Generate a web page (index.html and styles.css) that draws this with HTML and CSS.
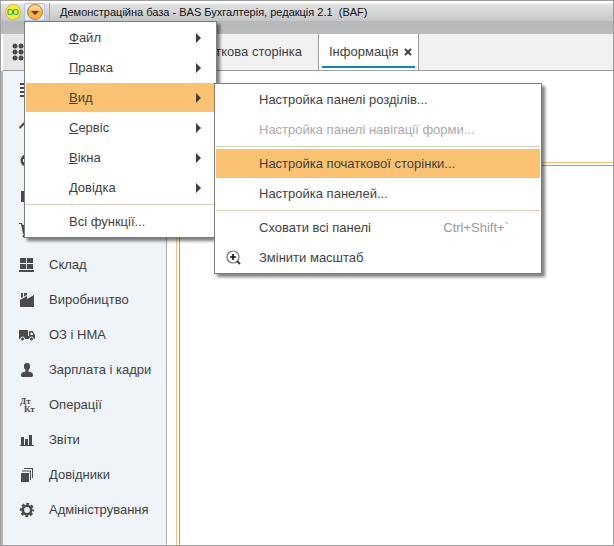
FILE: index.html
```html
<!DOCTYPE html>
<html lang="uk">
<head>
    <meta charset="UTF-8">
    <meta name="viewport" content="width=device-width, initial-scale=1.0">
    <title>Демонстраційна база - BAS Бухгалтерія</title>
    <link rel="stylesheet" href="styles.css">
</head>
<body>
    <!-- Title bar -->
    <header class="titlebar">
        <svg class="app-logo" viewBox="0 0 16 16" width="16" height="16" aria-hidden="true">
            <circle cx="8" cy="8" r="7.5" fill="#f9ee2c" stroke="#e6b93c"/>
            <path d="M7.500 6.500V9C7.500 10 7 10.500 6 10.500H4.500C3.500 10.500 3 10 3 9V7C3 6 3.500 5.500 4.500 5.500H6C7 5.500 7.300 6 8 8S9 10.500 10 10.500H11.500C12.500 10.500 13 10 13 9V7C13 6 12.500 5.500 11.500 5.500H10C9 5.500 8.500 6 8.500 7V9.500" fill="none" stroke="#18b07a" stroke-width="1.200"/>
        </svg>
        <div class="main-menu">
            <button type="button" class="menu-toggle" aria-label="Головне меню" aria-expanded="true">
                <svg viewBox="0 0 16 16" width="16" height="16" aria-hidden="true">
                    <circle cx="8" cy="8" r="7.500" fill="#fbb03f" stroke="#c07a2a"/>
                    <path d="M2 7A6 6 0 0 1 14 7Q8 5 2 7Z" fill="#fdd28c"/>
                    <path d="M4 7H12L8 11Z" fill="#5c3d1e"/>
                </svg>
            </button>
            <ul class="menu">
                <li><button type="button" class="menu-item has-submenu"><u>Ф</u>айл</button></li>
                <li><button type="button" class="menu-item has-submenu"><u>П</u>равка</button></li>
                <li class="menu-parent">
                    <button type="button" class="menu-item has-submenu active"><u>В</u>ид</button>
                    <ul class="menu submenu">
                        <li><button type="button" class="menu-item">Настройка панелі розділів...</button></li>
                        <li><button type="button" class="menu-item" disabled>Настройка панелі навігації форми...</button></li>
                        <li class="separator"></li>
                        <li><button type="button" class="menu-item active">Настройка початкової сторінки...</button></li>
                        <li><button type="button" class="menu-item">Настройка панелей...</button></li>
                        <li class="separator"></li>
                        <li><button type="button" class="menu-item">Сховати всі панелі <span class="shortcut">Ctrl+Shift+`</span></button></li>
                        <li>
                            <button type="button" class="menu-item with-icon">
                                <svg viewBox="0 0 16 16" width="16" height="16" aria-hidden="true">
                                    <circle cx="7" cy="7" r="6" fill="#fff" stroke="#777" stroke-width="1.200"/>
                                    <path d="M7 4V10M4 7H10" stroke="#111" stroke-width="1.600"/>
                                    <path d="M11 11L14 14" stroke="#444" stroke-width="2.200"/>
                                </svg>
                                Змінити масштаб
                            </button>
                        </li>
                    </ul>
                </li>
                <li><button type="button" class="menu-item has-submenu"><u>С</u>ервіс</button></li>
                <li><button type="button" class="menu-item has-submenu"><u>В</u>ікна</button></li>
                <li><button type="button" class="menu-item has-submenu"><u>Д</u>овідка</button></li>
                <li class="separator"></li>
                <li><button type="button" class="menu-item">Всі функції...</button></li>
            </ul>
        </div>
        <h1 class="app-title">Демонстраційна база - BAS Бухгалтерія, редакція 2.1 &nbsp;(BAF)</h1>
    </header>

    <!-- Tabs -->
    <nav class="tabs">
        <button type="button" class="apps-button" aria-label="Розділи">
            <svg viewBox="0 0 18 18" width="18" height="18" fill="#4a4a4a" aria-hidden="true">
                <circle cx="3" cy="3" r="2.500"/><circle cx="9" cy="3" r="2.500"/><circle cx="15" cy="3" r="2.500"/>
                <circle cx="3" cy="9" r="2.500"/><circle cx="9" cy="9" r="2.500"/><circle cx="15" cy="9" r="2.500"/>
                <circle cx="3" cy="15" r="2.500"/><circle cx="9" cy="15" r="2.500"/><circle cx="15" cy="15" r="2.500"/>
            </svg>
        </button>
        <a href="#" class="tab tab-home">Початкова сторінка</a>
        <div class="tab current">
            <a href="#">Інформація</a>
            <button type="button" class="tab-close" aria-label="Закрити">
                <svg viewBox="0 0 8 8" width="8" height="8" aria-hidden="true">
                    <path d="M1 1L7 7M7 1L1 7" stroke="#444" stroke-width="2"/>
                </svg>
            </button>
        </div>
    </nav>

    <div class="workspace">
        <!-- Sections -->
        <nav class="sidebar">
            <a href="#" class="section" aria-label="Головне">
                <svg viewBox="0 0 16 16" width="16" height="16" aria-hidden="true"><path d="M1 1H15V3H1ZM1 5H15V7H1ZM1 9H15V11H1ZM1 13H15V15H1Z"/></svg>
            </a>
            <a href="#" class="section" aria-label="Керівнику">
                <svg viewBox="0 0 16 16" width="16" height="16" aria-hidden="true"><path d="M0 10L5 5L9 9L14 3L16 5L9 12L5 8L1 12Z"/></svg>
            </a>
            <a href="#" class="section" aria-label="Банк і каса">
                <svg viewBox="0 0 16 16" width="16" height="16" aria-hidden="true"><path fill-rule="evenodd" d="M8 2A6.500 6.500 0 1 0 8 15A6.500 6.500 0 1 0 8 2ZM4 7H9V10H4Z"/></svg>
            </a>
            <a href="#" class="section" aria-label="Продажі">
                <svg viewBox="0 0 16 16" width="16" height="16" aria-hidden="true"><path d="M2 4H15V15H2Z"/></svg>
            </a>
            <a href="#" class="section" aria-label="Покупки">
                <svg viewBox="0 0 16 16" width="16" height="16" aria-hidden="true"><path d="M0 1H3L4 3H15L13 10H5L5 11H13V12H4L2 2H0Z"/><circle cx="5" cy="14" r="1.500"/><circle cx="12" cy="14" r="1.500"/></svg>
            </a>
            <a href="#" class="section">
                <svg viewBox="0 0 16 16" width="16" height="16" aria-hidden="true"><path d="M1 1H7V6H1ZM8 1H14V6H8ZM1 7H7V12H1ZM8 7H14V12H8ZM0 13H15V15H0Z"/></svg>
                Склад
            </a>
            <a href="#" class="section">
                <svg viewBox="0 0 16 16" width="16" height="16" aria-hidden="true"><path d="M1 15V8L8 4V7L15 3V15ZM2 1H4V5L2 6ZM5 1H8V3L5 4.500Z"/></svg>
                Виробництво
            </a>
            <a href="#" class="section">
                <svg viewBox="0 0 16 16" width="16" height="16" aria-hidden="true"><path fill-rule="evenodd" d="M0 3H9V12H0ZM10 4H13.500L16 8V12H10ZM11.500 5.500V8H14.500L13 5.500Z"/><path d="M8 9H11V12H8Z"/><circle cx="3.500" cy="12" r="2" stroke="#eef4f7"/><circle cx="12.500" cy="12" r="2" stroke="#eef4f7"/></svg>
                ОЗ і НМА
            </a>
            <a href="#" class="section">
                <svg viewBox="0 0 16 16" width="16" height="16" aria-hidden="true"><path d="M8 1C10.500 1 11.500 3 11 5C10.800 7 10 7.500 9.500 8V9.500C12 10 14 10.500 14 13V14L13 15H3L2 14V13C2 10.500 4 10 6.500 9.500V8C6 7.500 5.200 7 5 5C4.500 3 5.500 1 8 1Z"/></svg>
                Зарплата і кадри
            </a>
            <a href="#" class="section">
                <svg viewBox="0 0 16 16" width="16" height="16" aria-hidden="true" class="debit-credit"><text x="1" y="7">Дт</text><text x="5" y="15">Кт</text></svg>
                Операції
            </a>
            <a href="#" class="section">
                <svg viewBox="0 0 16 16" width="16" height="16" aria-hidden="true"><path d="M1 13H15V14H1ZM2 5H5V13H2ZM6 7H9V13H6ZM10 3H13V13H10Z"/></svg>
                Звіти
            </a>
            <a href="#" class="section">
                <svg viewBox="0 0 16 16" width="16" height="16" aria-hidden="true"><path d="M2 6H10V15H2ZM3 3.500H12V13H11V4.500H3ZM5 1H14V11H13V2H5Z"/></svg>
                Довідники
            </a>
            <a href="#" class="section">
                <svg viewBox="0 0 16 16" width="16" height="16" aria-hidden="true"><circle cx="8" cy="8" r="4.200" fill="none" stroke="#4a4a4a" stroke-width="2.600"/><circle cx="8" cy="8" r="6.200" fill="none" stroke="#4a4a4a" stroke-width="2" stroke-dasharray="2.800 2.070" stroke-dashoffset="1.400"/></svg>
                Адміністрування
            </a>
        </nav>

        <!-- Work area -->
        <main class="content">
            <div class="frame">
                <div class="frame-inner"></div>
            </div>
        </main>
    </div>
</body>
</html>
```

FILE: styles.css
```css
:root {
    --edge: #9e9e9e;
    --highlight: #fac271;
    --text: #3f3f3f;
    --icon: #4a4a4a;
    --sidebar-bg: #eef4f7;
    --tabs-bg: #f1f1f1;
    --accent: #0a85c7;
}

* {
    margin: 0;
    padding: 0;
    box-sizing: border-box;
}

body {
    min-height: 100vh;
    display: flex;
    flex-direction: column;
    border: 1px solid var(--edge);
    background-color: #fff;
    color: var(--text);
    font: 13px/16px "Liberation Sans", Arial, sans-serif;
}

button {
    border: none;
    background: none;
    color: inherit;
    font: inherit;
}

a {
    color: inherit;
    text-decoration: none;
}

ul {
    list-style: none;
}

/* Title bar */
.titlebar {
    height: 33px;
    padding: 2px 4px 0;
    display: flex;
    align-items: flex-start;
    background: linear-gradient(#fff 0, #fff 2px, #e2e3e3 3px, #c4c5c6 20px, #b7b8b9 20px, #bbbcbd 100%);
}

.app-logo {
    margin-top: 1px;
}

.main-menu {
    position: relative;
    margin-left: 3px;
    padding-right: 4px;
    border-right: 1px solid #a9aaab;
}

.menu-toggle {
    width: 21px;
    height: 18px;
    display: flex;
    align-items: center;
    justify-content: center;
    border: 1px solid #a8c4ec;
    border-radius: 2px;
    background-color: #e4ecf8;
}

.app-title {
    margin-left: 10px;
    color: #111;
    font: 11px/18px "Liberation Sans", Arial, sans-serif;
    white-space: nowrap;
}

/* Menus */
.menu {
    position: absolute;
    top: 18px;
    left: 0;
    z-index: 10;
    width: 193px;
    padding: 1px;
    display: flex;
    flex-direction: column;
    gap: 1px;
    border: 1px solid #7d7d7d;
    background-color: #fff;
    box-shadow: 3px 3px 3px rgba(0, 0, 0, 0.5);
}

.menu-parent {
    position: relative;
}

.submenu {
    top: 0;
    left: 188px;
    width: 328px;
}

.menu-item {
    width: 100%;
    height: 29px;
    padding: 0 14px 0 43px;
    display: flex;
    align-items: center;
    text-align: left;
    white-space: nowrap;
}

.menu-item.active {
    background-color: var(--highlight);
}

.menu-item:disabled {
    color: #a9a9a9;
}

.has-submenu::after {
    content: "";
    margin-left: auto;
    border: 5px solid transparent;
    border-left-color: var(--text);
    border-right-width: 0;
}

.with-icon {
    padding-left: 10px;
    gap: 17px;
}

.shortcut {
    margin-left: auto;
    padding-right: 17px;
    color: #999;
}

.separator {
    height: 1px;
    margin: 1px 0;
    background-color: #d8d0bd;
}

/* Tabs */
.tabs {
    height: 37px;
    margin-left: 2px;
    display: flex;
    border-bottom: 1px solid var(--edge);
    background-color: var(--tabs-bg);
}

.apps-button {
    width: 37px;
    padding-left: 9px;
    display: flex;
    align-items: center;
    background-color: #e6e6e6;
}

.tab {
    display: flex;
    align-items: center;
    border-right: 1px solid var(--edge);
}

.tab-home {
    width: 279px;
    justify-content: flex-end;
    padding-right: 16px;
}

.tab.current {
    padding: 0 6px 0 10px;
    gap: 5px;
    background: linear-gradient(var(--accent), var(--accent)) center 32px / calc(100% - 6px) 2px no-repeat #fff;
}

.tab-close {
    display: flex;
}

/* Workspace */
.workspace {
    flex: 1;
    display: flex;
    border-left: 2px solid #b6b4b6;
}

.sidebar {
    width: 164px;
    padding-top: 1px;
    border-right: 1px solid #adb0b2;
    background-color: var(--sidebar-bg);
}

.section {
    height: 35px;
    padding-left: 16px;
    display: flex;
    align-items: center;
    gap: 14px;
    white-space: nowrap;
}

.section svg {
    fill: var(--icon);
}

.debit-credit text {
    font: bold 9px "Liberation Serif", serif;
}

.content {
    flex: 1;
    display: flex;
    padding: 91px 0 0 9px;
}

.frame {
    flex: 1;
    display: flex;
    padding: 2px 0 0 2px;
    border-top: 1px solid var(--highlight);
    border-left: 1px solid var(--highlight);
}

.frame-inner {
    flex: 1;
    border-top: 1px solid var(--edge);
    border-left: 1px solid var(--edge);
}
```
